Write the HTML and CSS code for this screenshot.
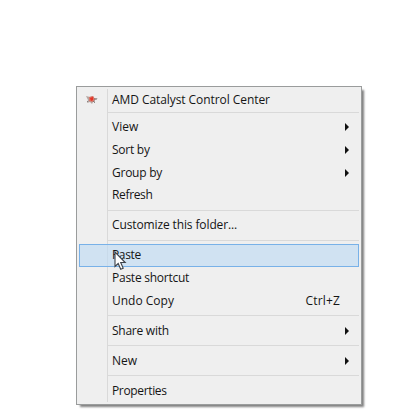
FILE: index.html
```html
<!DOCTYPE html>
<html lang="en">
<head>
<meta charset="utf-8">
<title>Context menu</title>
<link rel="stylesheet" href="styles.css">
</head>
<body>
<div class="menu" role="menu">
  <div class="item first"><svg class="logo" width="14" height="12" viewBox="0 0 14 12"><path d="M1 2l4 1 3-1 1 2 4 0.500-3 1.500 0 2-2 0-1 2-2-2-3 1 1-3z" fill="#b5a5a1"/><path d="M4 3l4-1 2 3-2 3-4-1z" fill="#da7668"/><path d="M5 4l3-1v3l-2 1z" fill="#e63326"/><path d="M9 5h3M3 7l-1 1M8 7l2 2" stroke="#77706f" stroke-width=".8"/></svg><span class="snug">AMD Catalyst Control Center</span></div>
  <div class="sep tight"></div>
  <div class="item"><span>View</span><i class="arrow"></i></div>
  <div class="item"><span class="narrow">Sort by</span><i class="arrow"></i></div>
  <div class="item"><span class="narrow">Group by</span><i class="arrow"></i></div>
  <div class="item raised"><span class="narrower">Refresh</span></div>
  <div class="sep"></div>
  <div class="item raised"><span class="close">Customize this folder...</span></div>
  <div class="sep"></div>
  <div class="item active raised"><span class="narrower">Paste</span>
    <svg class="cursor" width="14" height="20" viewBox="0 0 14 20"><path d="M1 1v14.500l3.200-3 2.500 5.800 2.500-1.100-2.500-5.700h4.500z" fill="#fff" stroke="#3c4148" stroke-width="1.100"/></svg>
  </div>
  <div class="item raised"><span class="narrow">Paste shortcut</span></div>
  <div class="item short"><span>Undo Copy</span><span class="key">Ctrl+Z</span></div>
  <div class="sep"></div>
  <div class="item"><span class="narrow">Share with</span><i class="arrow"></i></div>
  <div class="sep"></div>
  <div class="item"><span>New</span><i class="arrow"></i></div>
  <div class="sep"></div>
  <div class="item"><span class="narrower">Properties</span></div>
</div>
</body>
</html>
```
FILE: styles.css
```css
* { box-sizing: border-box; }
body {
  margin: 0;
  padding: 86px 0 0 76px;
  height: 418px;
  background: #fff;
  font: 12px/20px "Open Sans", "Noto Sans", sans-serif;
  color: #151515;
}
.menu {
  width: 286px;
  padding: 2px;
  border: 1px solid #9a9c9c;
  background: linear-gradient(90deg, transparent 28px, #d9d9d9 28px, #d9d9d9 29px, transparent 29px) content-box, #efefef;
  box-shadow: 3px 3px 2px -1px rgba(0, 0, 0, .5);
}
.item {
  position: relative;
  display: flex;
  align-items: center;
  height: 23px;
  padding: 0 10px 0 33px;
  white-space: nowrap;
}
.first { height: 21px; }
.short { height: 22px; }
.raised { padding-bottom: 2px; }
.active {
  background: rgba(190, 218, 242, .65);
  border: 1px solid #78b1e8;
  padding-left: 32px;
}
.snug { letter-spacing: -.07px; }
.close { letter-spacing: -.12px; }
.narrow { letter-spacing: -.25px; }
.narrower { letter-spacing: -.35px; }
.logo { position: absolute; left: 6px; top: 5px; }
.arrow {
  margin-left: auto;
  border: solid transparent;
  border-width: 4px 0 4px 4px;
  border-left-color: #111;
}
.key { margin-left: auto; margin-right: 9px; letter-spacing: .15px; }
.sep { height: 1px; margin: 3px 0 3px 29px; background: #d9d9d9; }
.tight { margin-top: 2px; margin-bottom: 2px; }
.cursor { position: absolute; left: 34px; top: 6px; z-index: 1; }
```
